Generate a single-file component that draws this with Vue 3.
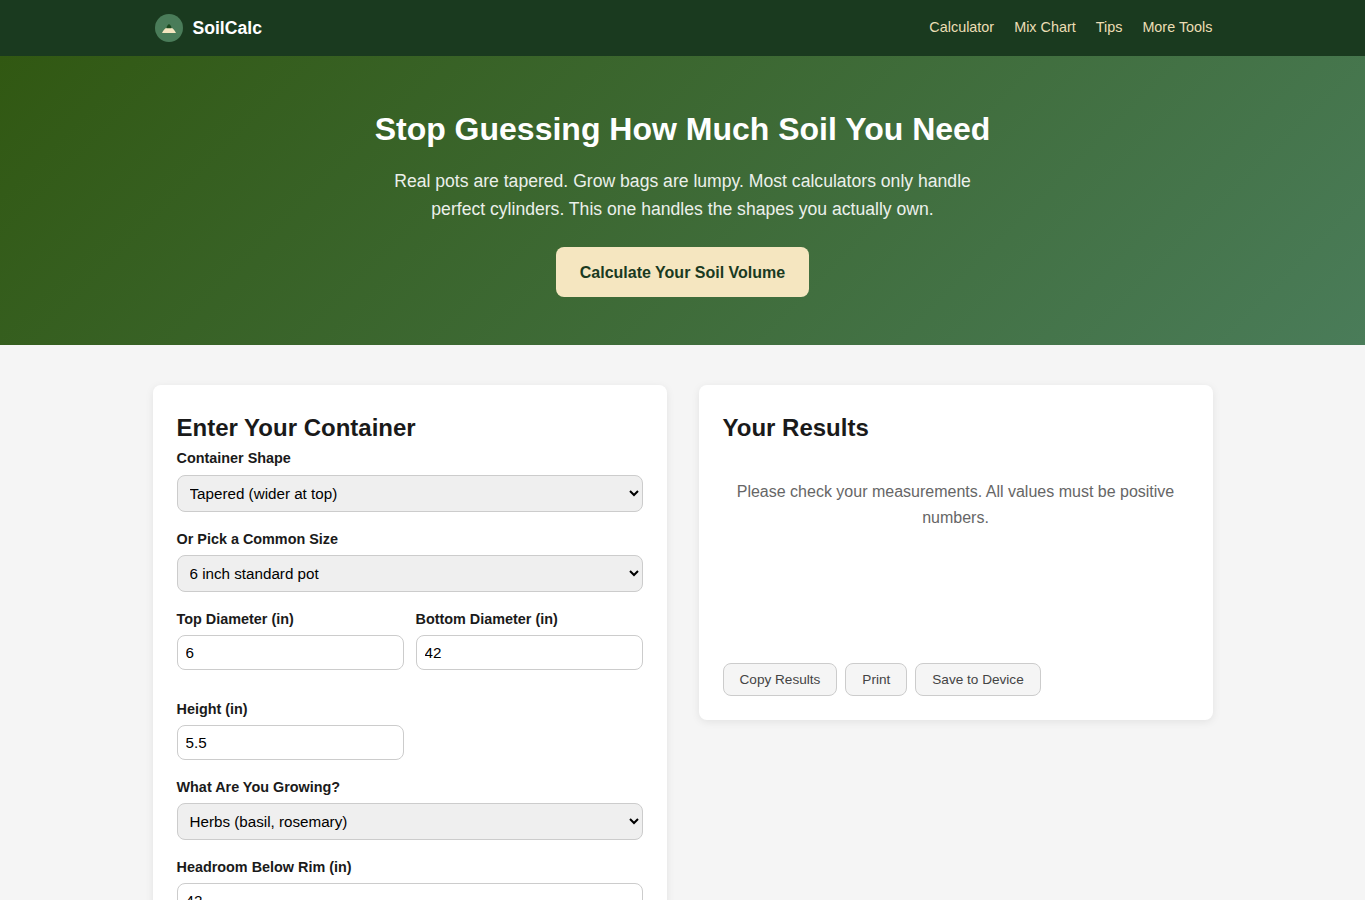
<script setup>
import { ref } from 'vue'

const navLinks = ['Calculator', 'Mix Chart', 'Tips', 'More Tools']
const shapes = ['Tapered (wider at top)', 'Cylinder', 'Square', 'Grow bag']
const sizes = ['6 inch standard pot', '8 inch standard pot', '10 inch standard pot']
const plants = ['Herbs (basil, rosemary)', 'Vegetables', 'Flowers', 'Succulents']

const shape = ref(shapes[0])
const size = ref(sizes[0])
const plant = ref(plants[0])
const topDiameter = ref('6')
const bottomDiameter = ref('42')
const height = ref('5.5')
const headroom = ref('42')
</script>

<template>
  <header class="site-header">
    <div class="container header-inner">
      <a class="logo" href="#">
        <span class="logo-mark">
          <svg viewBox="0 0 14 9" width="14" height="9" aria-hidden="true">
            <path d="M0 9 C1.5 6.5 3 3.8 5 3.8 L9 3.8 C11 3.8 12.5 6.5 14 9 Z" fill="#f5e6c0" />
            <path d="M4.4 4.2 C4.8 2 5.9 0.3 7 0.3 C8.1 0.3 9.2 2 9.6 4.2 Z" fill="#1a4a1f" />
          </svg>
        </span>
        SoilCalc
      </a>
      <nav class="nav">
        <a v-for="link in navLinks" :key="link" href="#">{{ link }}</a>
      </nav>
    </div>
  </header>

  <section class="hero">
    <h1>Stop Guessing How Much Soil You Need</h1>
    <p>Real pots are tapered. Grow bags are lumpy. Most calculators only handle perfect cylinders. This one handles the shapes you actually own.</p>
    <a class="cta" href="#">Calculate Your Soil Volume</a>
  </section>

  <main class="container layout">
    <section class="card">
      <h2>Enter Your Container</h2>

      <div class="field">
        <label>Container Shape</label>
        <select v-model="shape">
          <option v-for="s in shapes" :key="s">{{ s }}</option>
        </select>
      </div>

      <div class="field">
        <label>Or Pick a Common Size</label>
        <select v-model="size">
          <option v-for="s in sizes" :key="s">{{ s }}</option>
        </select>
      </div>

      <div class="field-grid">
        <div class="field">
          <label>Top Diameter (in)</label>
          <input v-model="topDiameter" type="text" />
        </div>
        <div class="field">
          <label>Bottom Diameter (in)</label>
          <input v-model="bottomDiameter" type="text" />
        </div>
        <div class="field">
          <label>Height (in)</label>
          <input v-model="height" type="text" />
        </div>
      </div>

      <div class="field">
        <label>What Are You Growing?</label>
        <select v-model="plant">
          <option v-for="p in plants" :key="p">{{ p }}</option>
        </select>
      </div>

      <div class="field">
        <label>Headroom Below Rim (in)</label>
        <input v-model="headroom" type="text" />
      </div>
    </section>

    <section class="card results">
      <h2>Your Results</h2>
      <div class="result-body">
        <p>Please check your measurements. All values must be positive numbers.</p>
      </div>
      <div class="actions">
        <button type="button">Copy Results</button>
        <button type="button">Print</button>
        <button type="button">Save to Device</button>
      </div>
    </section>
  </main>
</template>

<style>
body {
  background: #f5f5f5;
}
</style>

<style scoped>
* {
  box-sizing: border-box;
}

.container {
  width: 1060px;
  margin: 0 auto;
}

.site-header {
  height: 56px;
  background: #1a3a1f;
  font-family: "Liberation Sans", Arial, sans-serif;
}

.header-inner {
  height: 100%;
  display: flex;
  align-items: center;
  justify-content: space-between;
}

.logo {
  display: flex;
  align-items: center;
  gap: 10px;
  padding-left: 2px;
  color: #fff;
  font-size: 17.6px;
  font-weight: 700;
  text-decoration: none;
}

.logo-mark {
  width: 28px;
  height: 28px;
  border-radius: 50%;
  background: #4a7c59;
  display: flex;
  align-items: center;
  justify-content: center;
}

.nav {
  display: flex;
  gap: 20px;
  padding-bottom: 2px;
}

.nav a {
  color: #ecdeb5;
  font-size: 14.4px;
  text-decoration: none;
}

.hero {
  height: 289px;
  padding-top: 48px;
  background: linear-gradient(135deg, #315812, #4a7c59);
  color: #fff;
  text-align: center;
  font-family: "Liberation Sans", Arial, sans-serif;
}

.hero h1 {
  margin: 0 0 12px;
  font-size: 32px;
  line-height: 1.6;
  font-weight: 700;
}

.hero p {
  width: 600px;
  margin: 0 auto 24px;
  font-size: 17.6px;
  line-height: 28px;
  opacity: 0.9;
}

.cta {
  display: inline-block;
  padding: 13px 24px 11px;
  border-radius: 8px;
  background: #f5e6c0;
  color: #1a3a1f;
  font-size: 16px;
  line-height: 26px;
  font-weight: 700;
  text-decoration: none;
}

.layout {
  display: grid;
  grid-template-columns: 1fr 1fr;
  gap: 32px;
  align-items: start;
  padding: 40px 0;
  font-family: "Liberation Sans", Arial, sans-serif;
  color: #1a1a1a;
}

.card {
  background: #fff;
  border-radius: 8px;
  padding: 24px;
  box-shadow: 0 2px 8px rgba(0, 0, 0, 0.08);
}

.card h2 {
  margin: 0;
  font-size: 24px;
  line-height: 38.4px;
  font-weight: 700;
}

.field {
  margin-bottom: 16px;
}

.field label {
  display: block;
  margin-bottom: 4.1px;
  font-size: 14.4px;
  line-height: 23.04px;
  font-weight: 700;
}

.field select,
.field input {
  display: block;
  width: 100%;
  border: 1px solid #ccc;
  border-radius: 8px;
  font-family: inherit;
  font-size: 15.2px;
  color: #000;
}

.field select {
  height: 37px;
  padding: 8px;
  background-color: #efefef;
}

.field input {
  height: 35px;
  padding: 8px;
  background: #fff;
}

.field-grid {
  display: grid;
  grid-template-columns: 1fr 1fr;
  gap: 12px;
}

.result-body {
  min-height: 200px;
  padding: 32px 0;
  text-align: center;
  color: #666;
}

.result-body p {
  margin: 0;
  font-size: 16px;
  line-height: 25.6px;
}

.actions {
  display: flex;
  gap: 8px;
  margin-top: 16px;
}

.actions button {
  height: 33px;
  padding: 0 16px;
  border: 1px solid #ccc;
  border-radius: 8px;
  background: #f5f5f5;
  color: #444;
  font-family: inherit;
  font-size: 13.6px;
}
</style>
